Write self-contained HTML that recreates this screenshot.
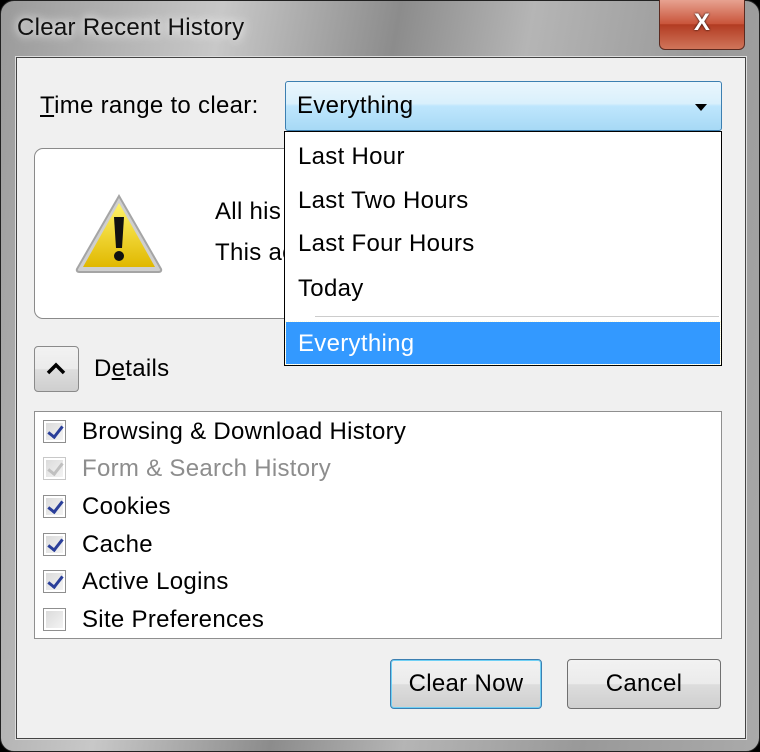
<!DOCTYPE html>
<html><head><style>
*{margin:0;padding:0;box-sizing:border-box}
body{width:760px;height:752px;background:#000;overflow:hidden;font-family:"Liberation Sans",sans-serif;font-size:24px;letter-spacing:0.3px;color:#000;position:relative}
.frame{position:absolute;left:0;top:0;width:760px;height:752px;border-radius:14px;border:1px solid #222;background:linear-gradient(100deg,#9a9a9a 0%,#c8c8c8 25%,#8c8c8c 45%,#b5b5b5 60%,#999 80%,#aaa 100%)}
.ttl{position:absolute;left:17px;top:14px;font-size:24px;color:#111;text-shadow:0 0 8px #eee,0 0 12px #eee}
.close{position:absolute;left:659px;top:-2px;width:86px;height:52px;border:1px solid #5a2a20;border-radius:0 0 6px 6px;background:linear-gradient(#e8a594,#c9543a 50%,#b23b22 51%,#d0755a);color:#fff;font-weight:bold;font-size:24px;text-align:center;line-height:48px;text-shadow:0 0 2px #000}
.client{position:absolute;left:16px;top:57px;width:730px;height:682px;background:#f0f0f0;border:1px solid #444;box-shadow:0 0 0 1px #ddd}
.abs{position:absolute;white-space:nowrap}
.combo{left:285px;top:81px;width:437px;height:50px;border:1px solid #3c7fb1;border-radius:3px;background:linear-gradient(#eaf6fd 0%,#d9f0fc 45%,#bee6fd 50%,#a7d9f5 100%);padding-left:11px;line-height:48px}
.arrow{position:absolute;right:14px;top:22px;width:0;height:0;border-left:6px solid transparent;border-right:6px solid transparent;border-top:7px solid #000}
.drop{left:284px;top:131px;width:438px;height:235px;background:#fff;border:1px solid #000}
.drop div{position:absolute;left:13px}
.warn{left:34px;top:148px;width:320px;height:171px;background:#fff;border:1px solid #8a8a8a;border-radius:9px}
.list{left:34px;top:411px;width:688px;height:228px;background:#fff;border:1px solid #8f8f8f}
.cb{position:absolute;left:8px;width:23px;height:23px;border:1px solid #8f8f8f;background:linear-gradient(135deg,#d8d8d8,#f6f6f6);box-shadow:inset 0 0 0 2px #fff}
.cb.c::after{content:"";position:absolute;left:7px;top:2px;width:6px;height:12px;border:solid #2a3f9a;border-width:0 3px 3px 0;transform:rotate(38deg)}
.cb.d{border-color:#c8c8c8}
.cb.d::after{content:"";position:absolute;left:7px;top:2px;width:6px;height:12px;border:solid #c0c0c0;border-width:0 3px 3px 0;transform:rotate(38deg)}
.lt{position:absolute;left:47px}
.btn{height:50px;border:1px solid #707070;border-radius:4px;background:linear-gradient(#f2f2f2 0%,#ebebeb 50%,#dddddd 51%,#cfcfcf 100%);text-align:center;line-height:48px;font-size:24px}
</style></head><body>
<div class="frame"></div>
<div class="ttl">Clear Recent History</div>
<div class="close">X</div>
<div class="client"></div>
<div class="abs" style="left:40px;top:92px"><u>T</u>ime range to clear:</div>
<div class="abs combo">Everything<span class="arrow"></span></div>
<div class="abs warn">
<svg style="position:absolute;left:39px;top:44px" width="90" height="82" viewBox="0 0 90 82"><defs><linearGradient id="g" x1="0" y1="0" x2="0" y2="1"><stop offset="0" stop-color="#fff36a"/><stop offset="1" stop-color="#e0b800"/></linearGradient></defs><path d="M45 3 L87 76 Q88 79 84 79 L6 79 Q2 79 3 76 Z" fill="#cfcfcf" stroke="#a5a5a5" stroke-width="2"/><path d="M45 10 L81 74 L9 74 Z" fill="url(#g)"/><path d="M40 24 L50 24 L48 55 L42 55 Z" fill="#111"/><circle cx="45" cy="63" r="5" fill="#111"/></svg>
<div class="abs" style="left:180px;top:49px">All his</div>
<div class="abs" style="left:180px;top:90px">This ac</div>
</div>
<div class="abs drop">
<div style="top:11px">Last Hour</div>
<div style="top:55px">Last Two Hours</div>
<div style="top:98px">Last Four Hours</div>
<div style="top:143px">Today</div>
<span style="position:absolute;left:30px;top:184px;width:404px;height:1px;background:#ccc"></span>
<span style="position:absolute;left:1px;top:190px;width:434px;height:42px;background:#3399ff;outline:1px dotted #ffd"></span>
<div style="top:198px;color:#fff">Everything</div>
</div>
<div class="abs btn" style="left:34px;top:346px;width:45px;height:46px;border-color:#8a8a8a;line-height:44px">
<svg width="20" height="14" viewBox="0 0 20 14" style="margin-top:15px;display:block;margin-left:11px"><path d="M2 11 L10 3 L18 11" fill="none" stroke="#000" stroke-width="3.5"/></svg></div>
<div class="abs" style="left:94px;top:355px">D<u>e</u>tails</div>
<div class="abs list">
<span class="cb c" style="top:8px"></span><div class="lt" style="top:6px">Browsing &amp; Download History</div>
<span class="cb d" style="top:45px"></span><div class="lt" style="top:43px;color:#8d8d8d">Form &amp; Search History</div>
<span class="cb c" style="top:83px"></span><div class="lt" style="top:81px">Cookies</div>
<span class="cb c" style="top:121px"></span><div class="lt" style="top:119px">Cache</div>
<span class="cb c" style="top:158px"></span><div class="lt" style="top:156px">Active Logins</div>
<span class="cb" style="top:196px"></span><div class="lt" style="top:194px">Site Preferences</div>
</div>
<div class="abs btn" style="left:390px;top:659px;width:152px;border-color:#3c7fb1;box-shadow:0 0 0 1px #6fd0f5 inset">Clear Now</div>
<div class="abs btn" style="left:567px;top:659px;width:154px">Cancel</div>
</body></html>
